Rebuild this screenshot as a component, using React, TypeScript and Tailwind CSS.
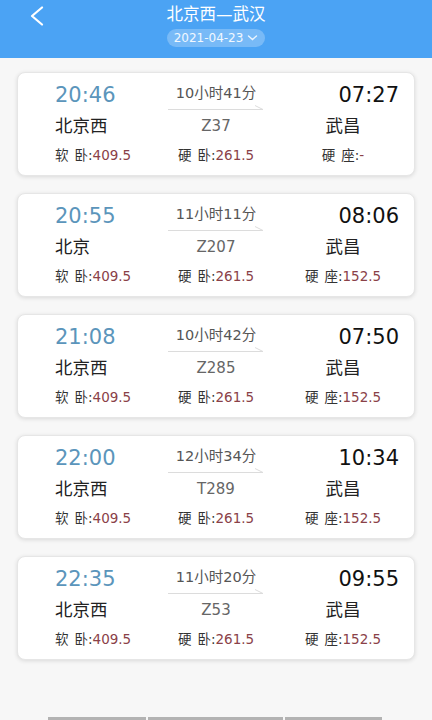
import React from "react";

type Train = {
  depart: string;
  arrive: string;
  duration: string;
  from: string;
  to: string;
  no: string;
  soft: string;
  hard: string;
  seat: string;
};

const trains: Train[] = [
  { depart: "20:46", arrive: "07:27", duration: "10小时41分", from: "北京西", to: "武昌", no: "Z37", soft: "409.5", hard: "261.5", seat: "-" },
  { depart: "20:55", arrive: "08:06", duration: "11小时11分", from: "北京", to: "武昌", no: "Z207", soft: "409.5", hard: "261.5", seat: "152.5" },
  { depart: "21:08", arrive: "07:50", duration: "10小时42分", from: "北京西", to: "武昌", no: "Z285", soft: "409.5", hard: "261.5", seat: "152.5" },
  { depart: "22:00", arrive: "10:34", duration: "12小时34分", from: "北京西", to: "武昌", no: "T289", soft: "409.5", hard: "261.5", seat: "152.5" },
  { depart: "22:35", arrive: "09:55", duration: "11小时20分", from: "北京西", to: "武昌", no: "Z53", soft: "409.5", hard: "261.5", seat: "152.5" },
];

function Price({ a, b, value }: { a: string; b: string; value: string }) {
  return (
    <span className="whitespace-nowrap text-[13.5px] leading-[28px]">
      <span className="text-[#333]">{a}</span>
      <span className="inline-block w-[6px]" />
      <span className="text-[#333]">{b}:</span>
      <span className="text-[#8a4148]">{value}</span>
    </span>
  );
}

function TrainCard({ t }: { t: Train }) {
  return (
    <div className="mx-[17px] h-[104px] rounded-[8px] border border-[#e6e6e6] bg-white pt-[8px] shadow-[0_1px_4px_rgba(0,0,0,0.12)]">
      {/* times */}
      <div className="grid h-[28px] grid-cols-3">
        <div className="pl-[37px] text-[21px] leading-[28px] text-[#5b95bb]">{t.depart}</div>
        <div className="flex flex-col items-center">
          <span className="h-[24px] text-[14.5px] leading-[24px] text-[#555]">{t.duration}</span>
          <svg width="96" height="6" viewBox="0 0 96 6" className="block">
            <line x1="0" y1="4.5" x2="95" y2="4.5" stroke="#dcdcdc" strokeWidth="1" />
            <line x1="87" y1="0.5" x2="95" y2="4.5" stroke="#dcdcdc" strokeWidth="1" />
          </svg>
        </div>
        <div className="pr-[15px] text-right text-[21px] leading-[28px] text-[#111]">{t.arrive}</div>
      </div>
      {/* stations */}
      <div className="mt-[3px] grid h-[28px] grid-cols-3">
        <div className="pl-[37px] text-[17.5px] leading-[28px] text-[#222]">{t.from}</div>
        <div className="text-center text-[15px] leading-[28px] text-[#666]">{t.no}</div>
        <div className="pr-[10px] text-center text-[17.5px] leading-[28px] text-[#222]">{t.to}</div>
      </div>
      {/* prices */}
      <div className="mt-[1px] grid h-[28px] grid-cols-3">
        <div className="pl-[37px]">
          <Price a="软" b="卧" value={t.soft} />
        </div>
        <div className="text-center">
          <Price a="硬" b="卧" value={t.hard} />
        </div>
        <div className="pr-[10px] text-center">
          <Price a="硬" b="座" value={t.seat} />
        </div>
      </div>
    </div>
  );
}

export default function App() {
  return (
    <div className="flex h-[720px] w-[432px] flex-col overflow-hidden bg-[#f7f7f7] font-['DejaVu_Sans','Noto_Sans_CJK_SC',sans-serif]">
      {/* Header */}
      <div className="relative flex h-[58px] shrink-0 flex-col items-center bg-[#4ba3f4]">
        <svg className="absolute left-[28px] top-[6px]" width="18" height="20" viewBox="0 0 18 20" fill="none">
          <path d="M14 1.5L4 10l10 8.5" stroke="white" strokeWidth="2.2" strokeLinecap="round" strokeLinejoin="round" />
        </svg>
        <div className="mt-[3px] h-[24px] text-[16.5px] leading-[24px] text-white">北京西—武汉</div>
        <div className="mt-[2px] flex h-[18px] items-center gap-[4px] rounded-full bg-white/25 px-[7px]">
          <span className="text-[12px] leading-[18px] text-white/90">2021-04-23</span>
          <svg width="11" height="8" viewBox="0 0 11 8" fill="none">
            <path d="M1.5 2l4 3.5 4-3.5" stroke="white" strokeOpacity="0.85" strokeWidth="1.4" strokeLinecap="round" />
          </svg>
        </div>
      </div>

      {/* Train list */}
      <div className="mt-[14px] flex flex-col gap-[17px]">
        {trains.map((t) => (
          <TrainCard key={t.no} t={t} />
        ))}
      </div>

      {/* bottom bar edge */}
      <div className="mt-auto flex h-[3px] gap-[2px] pl-[48px]">
        <div className="w-[98px] bg-[#b3b3b3]" />
        <div className="w-[135px] bg-[#b3b3b3]" />
        <div className="w-[97px] bg-[#b3b3b3]" />
      </div>
    </div>
  );
}
